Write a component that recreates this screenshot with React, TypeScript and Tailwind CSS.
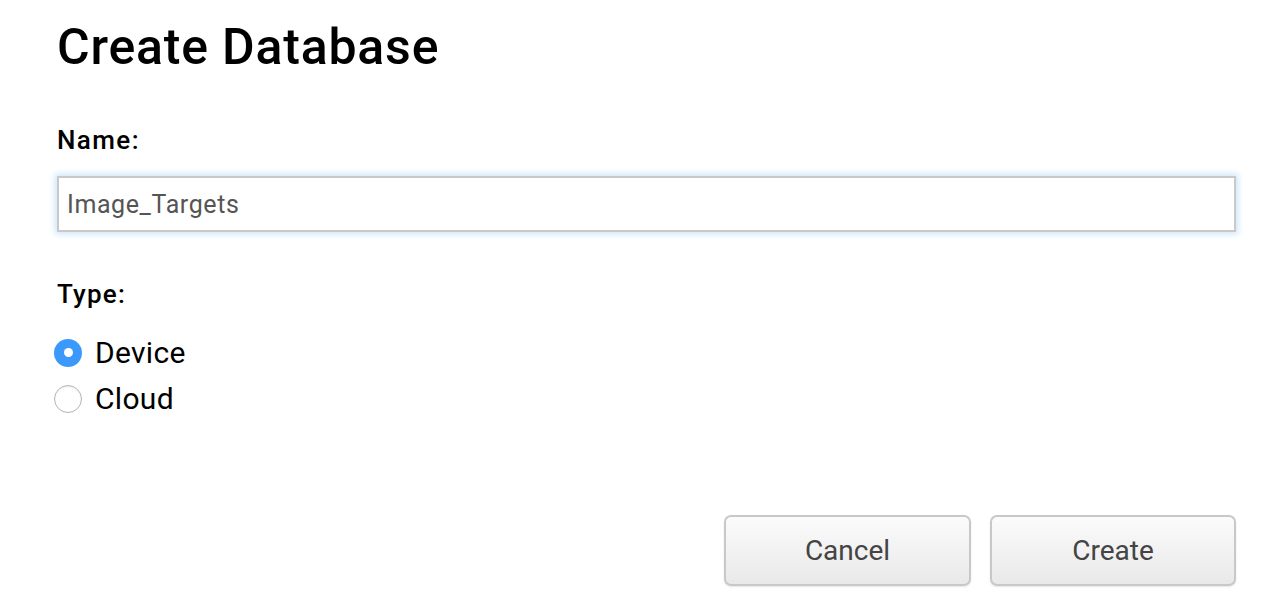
import React, { useState } from 'react';

const App: React.FC = () => {
    const [name, setName] = useState('Image_Targets');
    const [type, setType] = useState<'device' | 'cloud'>('device');

    const options: { id: 'device' | 'cloud'; label: string }[] = [
        { id: 'device', label: 'Device' },
        { id: 'cloud', label: 'Cloud' },
    ];

    return (
        <div className="w-[1277px] h-[614px] bg-white pl-[57px] pr-[41px] pt-[16px] font-['Roboto',sans-serif] text-black flex flex-col">
            <h1 className="text-[50px] leading-[62px] font-medium tracking-[0.8px]">Create Database</h1>

            <label className="mt-[46px] text-[26px] leading-[32px] font-medium tracking-[1.4px]">Name:</label>
            <input
                value={name}
                onChange={(e) => setName(e.target.value)}
                className="mt-[20px] h-[56px] w-full border-2 border-[#c9c9c9] px-[8px] text-[25px] text-[#555] tracking-[0.6px] outline-none shadow-[0_0_6px_2px_rgba(140,195,245,0.45)] font-['Roboto',sans-serif]"
            />

            <label className="mt-[46px] text-[26px] leading-[32px] font-medium tracking-[1.2px]">Type:</label>
            <div className="mt-[28px] flex flex-col gap-[17px] -ml-[3px]">
                {options.map(opt => {
                    const checked = type === opt.id;
                    return (
                        <label key={opt.id} className="flex items-center gap-[13px] cursor-pointer">
                            <input
                                type="radio"
                                className="sr-only"
                                checked={checked}
                                onChange={() => setType(opt.id)}
                            />
                            <span
                                className={
                                    checked
                                        ? 'w-[28px] h-[28px] rounded-full bg-[#3b99fc] flex items-center justify-center'
                                        : 'w-[28px] h-[28px] rounded-full bg-white border border-[#b5b5b5] shadow-[inset_0_1px_2px_rgba(0,0,0,0.08)]'
                                }
                            >
                                {checked && <span className="w-[9px] h-[9px] rounded-full bg-white" />}
                            </span>
                            <span className="text-[30px] leading-[29px] tracking-[0.3px]">{opt.label}</span>
                        </label>
                    );
                })}
            </div>

            <div className="mt-auto mb-[28px] flex justify-end gap-[19px]">
                <button className="w-[247px] h-[71px] rounded-[7px] border-2 border-[#c8c8c8] bg-gradient-to-b from-[#fbfbfb] to-[#e9e9e9] text-[28px] text-[#444] shadow-[0_1px_2px_rgba(0,0,0,0.1)]">
                    Cancel
                </button>
                <button className="w-[246px] h-[71px] rounded-[7px] border-2 border-[#c8c8c8] bg-gradient-to-b from-[#fbfbfb] to-[#e9e9e9] text-[28px] text-[#444] shadow-[0_1px_2px_rgba(0,0,0,0.1)]">
                    Create
                </button>
            </div>
        </div>
    );
};

export default App;
